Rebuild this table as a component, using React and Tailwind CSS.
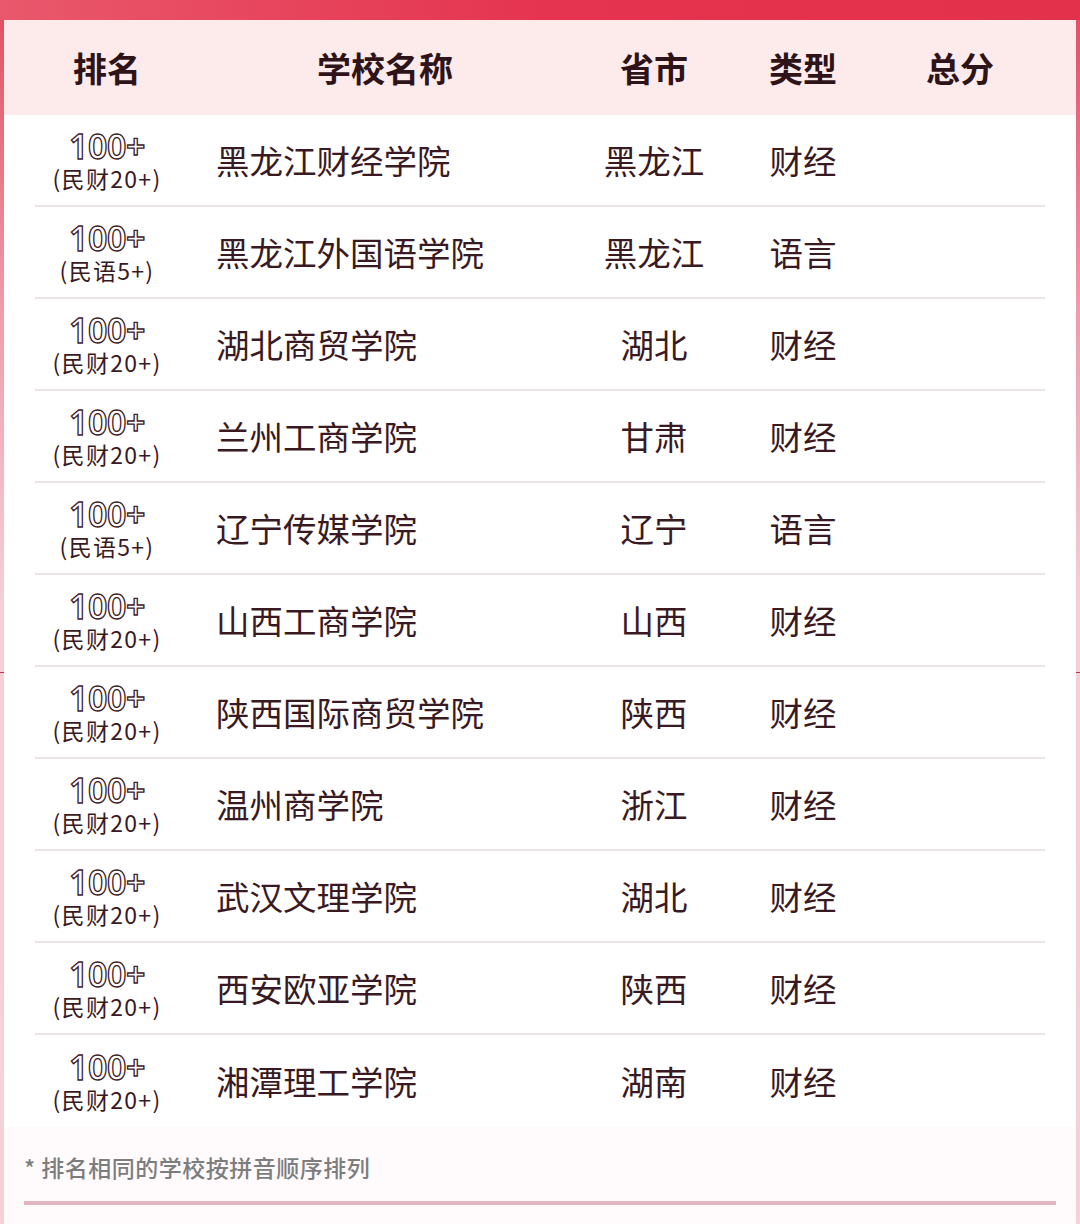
import React from "react";

const rows = [
  ["民财20+", "黑龙江财经学院", "黑龙江", "财经"],
  ["民语5+", "黑龙江外国语学院", "黑龙江", "语言"],
  ["民财20+", "湖北商贸学院", "湖北", "财经"],
  ["民财20+", "兰州工商学院", "甘肃", "财经"],
  ["民语5+", "辽宁传媒学院", "辽宁", "语言"],
  ["民财20+", "山西工商学院", "山西", "财经"],
  ["民财20+", "陕西国际商贸学院", "陕西", "财经"],
  ["民财20+", "温州商学院", "浙江", "财经"],
  ["民财20+", "武汉文理学院", "湖北", "财经"],
  ["民财20+", "西安欧亚学院", "陕西", "财经"],
  ["民财20+", "湘潭理工学院", "湖南", "财经"],
];

const font = { fontFamily: '"Noto Sans CJK SC", "Noto Sans", sans-serif' };

export default function App() {
  return (
    <div
      className="relative w-[1080px] min-h-[1224px] bg-[linear-gradient(180deg,#e8455c_0px,#e2566a_40px,#ef9aa8_300px,#f3cfd7_600px,#f3d2da_1224px)] pt-[20px] px-[4px] overflow-hidden"
      style={font}
    >
      <div className="absolute inset-x-0 top-0 h-[20px] bg-[linear-gradient(90deg,#e9586c_0%,#e5344f_50%,#e3304b_100%)]" />
      <div className="absolute left-0 right-0 top-[672px] h-[1px] bg-[#c2304a]" />
      <div className="relative z-10 bg-white">
        {/* header */}
        <div className="h-[95px] bg-[#fdebec] flex items-center px-[31px] text-[34px] font-bold text-[#2e1419] leading-none">
          <div className="w-[144px] text-center">排名</div>
          <div className="w-[412px] text-center">学校名称</div>
          <div className="w-[126px] text-center">省市</div>
          <div className="w-[172px] text-center">类型</div>
          <div className="w-[142px] text-center">总分</div>
        </div>
        {/* rows */}
        <div className="px-[31px]">
          {rows.map((r, i) => (
            <div
              key={i}
              className={
                "h-[92px] flex items-center text-[#3a1a22] " +
                (i < rows.length - 1 ? "border-b-2 border-[#ebe3e5]" : "")
              }
            >
              <div className="w-[144px] flex flex-col items-center pt-[1px]">
                <div
                  className="text-[34px] leading-[34px] font-semibold text-white tracking-[-0.5px] [-webkit-text-stroke:1.3px_#3e2027]"
                  style={{ fontFamily: '"Noto Sans", sans-serif' }}
                >
                  100+
                </div>
                <div className="text-[23px] leading-[30px] tracking-[1.3px] text-[#3a1a22]">
                  ({r[0]})
                </div>
              </div>
              <div className="w-[412px] pl-[37px] text-[33.5px] leading-none">{r[1]}</div>
              <div className="w-[126px] text-center text-[33.5px] leading-none">{r[2]}</div>
              <div className="w-[172px] text-center text-[33.5px] leading-none">{r[3]}</div>
              <div className="w-[142px]" />
            </div>
          ))}
        </div>
        {/* footer */}
        <div className="bg-[#fffbfc] pt-[24px] pb-[19px] px-[20px]">
          <div className="text-[23px] leading-[32px] tracking-[0.5px] font-medium text-[#7d7d7d]">
            * 排名相同的学校按拼音顺序排列
          </div>
          <div className="mt-[18px] h-[4px] bg-[#e3b5c0]" />
        </div>
      </div>
    </div>
  );
}
